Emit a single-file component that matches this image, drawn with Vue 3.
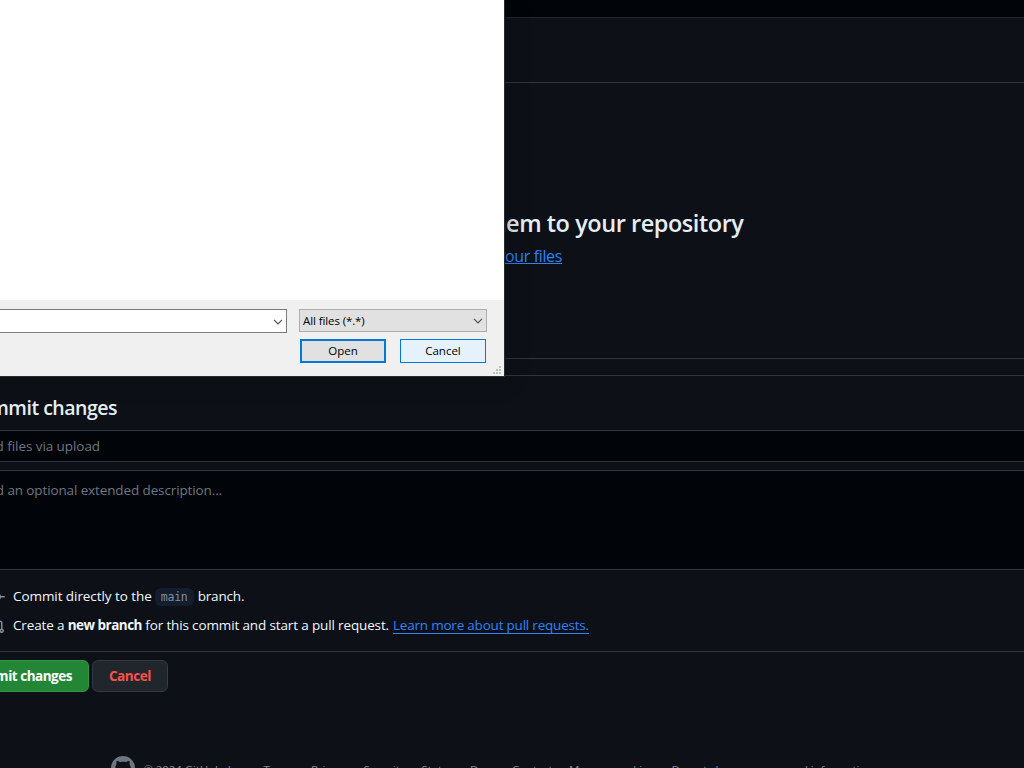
<script setup>
const footerLinks = [
  { label: 'Terms', left: 263.5 },
  { label: 'Privacy', left: 311 },
  { label: 'Security', left: 363.5 },
  { label: 'Status', left: 421.5 },
  { label: 'Docs', left: 470 },
  { label: 'Contact', left: 512 },
  { label: 'Manage cookies', left: 569 },
  { label: 'Do not share my personal information', left: 671.5 },
]
const slots = footerLinks.map((l, i) => ({
  label: l.label,
  width: i + 1 < footerLinks.length ? footerLinks[i + 1].left - l.left : 230,
}))
</script>

<template>
  <div class="page">
    <div class="topbar"></div>
    <div class="toolbar"></div>
    <section class="dropzone">
      <h2><span>Drag files here to add them to your repository</span></h2>
      <p>Or <a>choose your files</a></p>
    </section>

    <section class="commit">
      <h3><span>Commit changes</span></h3>
      <div class="field summary"><span>Add files via upload</span></div>
      <div class="field description"><span>Add an optional extended description...</span></div>
      <div class="choice first">
        <svg class="icon" width="16" height="16" viewBox="0 0 16 16"><path d="M11.93 8.5a4.002 4.002 0 0 1-7.86 0H.75a.75.75 0 0 1 0-1.5h3.32a4.002 4.002 0 0 1 7.86 0h3.32a.75.75 0 0 1 0 1.5Zm-1.43-.75a2.5 2.5 0 1 0-5 0 2.5 2.5 0 0 0 5 0Z" /></svg>
        <span class="direct">Commit directly to the</span><code>main</code><span class="branch">branch.</span>
      </div>
      <div class="choice">
        <svg class="icon" width="16" height="16" viewBox="0 0 16 16"><path d="M1.5 3.25a2.25 2.25 0 1 1 3 2.122v5.256a2.251 2.251 0 1 1-1.5 0V5.372A2.25 2.25 0 0 1 1.5 3.25Zm5.677-.177L9.573.677A.25.25 0 0 1 10 .854V2.5h1A2.5 2.5 0 0 1 13.5 5v5.628a2.251 2.251 0 1 1-1.5 0V5a1 1 0 0 0-1-1h-1v1.646a.25.25 0 0 1-.427.177L7.177 3.427a.25.25 0 0 1 0-.354ZM3.75 2.5a.75.75 0 1 0 0 1.5.75.75 0 0 0 0-1.5Zm0 9.5a.75.75 0 1 0 0 1.5.75.75 0 0 0 0-1.5Zm8.25.75a.75.75 0 1 0 1.5 0 .75.75 0 0 0-1.5 0Z" /></svg>
        <span class="create">Create a <b>new branch</b> for this commit and start a pull request.</span><a class="learn">Learn more about pull requests.</a>
      </div>
    </section>

    <div class="actions">
      <button class="submit">Commit changes</button>
      <button class="discard">Cancel</button>
    </div>

    <footer>
      <svg class="mark" width="24" height="24" viewBox="0 0 16 16"><path d="M8 0c4.42 0 8 3.58 8 8a8.013 8.013 0 0 1-5.45 7.59c-.4.08-.55-.17-.55-.38 0-.27.01-1.13.01-2.2 0-.75-.25-1.23-.54-1.48 1.78-.2 3.65-.88 3.65-3.95 0-.88-.31-1.59-.82-2.15.08-.2.36-1.02-.08-2.12 0 0-.67-.22-2.2.82-.64-.18-1.32-.27-2-.27-.68 0-1.36.09-2 .27-1.53-1.03-2.2-.82-2.2-.82-.44 1.1-.16 1.92-.08 2.12-.51.56-.82 1.28-.82 2.15 0 3.06 1.86 3.75 3.64 3.95-.23.2-.44.55-.51 1.07-.46.21-1.61.55-2.33-.66-.15-.24-.6-.83-1.23-.82-.67.01-.27.38.01.53.34.19.73.9.82 1.13.16.45.68 1.31 2.69.94 0 .67.01 1.3.01 1.49 0 .21-.15.45-.55.38A7.995 7.995 0 0 1 0 8c0-4.42 3.58-8 8-8Z" /></svg>
      <span class="legal">© 2024 GitHub, Inc.</span>
      <span v-for="s in slots" :key="s.label" :style="{ width: s.width + 'px' }">{{ s.label }}</span>
    </footer>

    <div class="dialog">
      <div class="list"></div>
      <div class="row">
        <div class="filename">
          <svg width="10" height="6" viewBox="0 0 10 6"><path d="M1 .8 5 4.8 9 .8" /></svg>
        </div>
        <div class="filter">
          <span>All files (*.*)</span>
          <svg width="10" height="6" viewBox="0 0 10 6"><path d="M1 .8 5 4.8 9 .8" /></svg>
        </div>
      </div>
      <div class="buttons">
        <button class="open">Open</button>
        <button class="cancel">Cancel</button>
      </div>
      <svg class="grip" width="8" height="8" viewBox="0 0 8 8"><path d="M6 0h2v2H6zM3 3h2v2H3zM6 3h2v2H6zM0 6h2v2H0zM3 6h2v2H3zM6 6h2v2H6z" /></svg>
    </div>
  </div>
</template>

<style>
html, body { margin: 0; background: #0d1117; }
</style>

<style scoped>
.page { position: relative; width: 1024px; height: 768px; overflow: hidden; background: #0d1117; color: #f0f6fc; font-family: "Open Sans", "Noto Sans", sans-serif; font-size: 13.5px; white-space: nowrap; }
.page * { box-sizing: border-box; }
.topbar { height: 18px; background: #010409; border-bottom: 1px solid #24292f; }
.toolbar { height: 65px; border-bottom: 1px solid #30363d; }
.dropzone { height: 276px; padding-top: 123px; border-bottom: 1px solid #30363d; }
h2, h3, p { margin: 0; }
h2 { width: 743.5px; height: 34px; display: flex; justify-content: flex-end; line-height: 34px; font-size: 23.5px; font-weight: 650; color: #e6edf3; letter-spacing: -.45px; }
p { width: 562px; margin-top: 4px; text-align: right; font-size: 16px; line-height: 24px; letter-spacing: -.35px; }
a { color: #2f81f7; text-decoration: underline; }
.commit { margin-top: 16px; height: 277px; border-top: 1px solid #30363d; border-bottom: 1px solid #30363d; }
h3 { width: 117px; height: 54px; display: flex; justify-content: flex-end; padding-top: 17px; line-height: 30px; font-size: 19.5px; font-weight: 650; color: #e6edf3; letter-spacing: -.5px; }
.field { background: #010409; border: solid #30363d; border-width: 1px 0; color: #6e7681; display: flex; }
.field span { display: flex; justify-content: flex-end; }
.summary { height: 32px; line-height: 30px; letter-spacing: -.07px; }
.summary span { width: 100px; }
.description { margin-top: 8px; height: 100px; padding-top: 9px; line-height: 20px; letter-spacing: -.12px; }
.description span { width: 222px; }
.choice { height: 20px; margin-top: 9px; margin-left: -11px; display: flex; align-items: center; line-height: 20px; color: #f0f6fc; }
.choice.first { margin-top: 17px; }
.icon { width: 16px; margin-right: 8px; fill: #848d97; flex: none; }
code { margin: 0 4px 0 3px; width: 39px; height: 18px; border-radius: 6px; background: #121d2f; color: #848d97; text-align: center; font: 11.5px/18px "DejaVu Sans Mono", monospace; letter-spacing: -.2px; }
.choice span { margin-bottom: 2px; }
.direct { letter-spacing: -.07px; }
.branch { letter-spacing: -.17px; }
.create { letter-spacing: -.14px; }
.create b { letter-spacing: -.53px; }
.learn { margin-left: 4px; margin-bottom: 1px; letter-spacing: -.21px; text-decoration: none; border-bottom: 1px solid #2f81f7; line-height: 16px; }
.actions { display: flex; gap: 3px; padding-top: 8px; height: 40px; margin-left: -40px; }
.actions button { height: 32px; border-radius: 6px; font: 700 13.5px/20px "Open Sans", sans-serif; padding: 0; white-space: nowrap; }
.submit { width: 129px; display: flex; justify-content: flex-end; align-items: center; padding-right: 16px !important; background: #238636; border: 1px solid #2f9a43; color: #fff; letter-spacing: -.48px; }
.discard { width: 76px; background: #21262d; border: 1px solid #363b42; color: #f85149; letter-spacing: -.42px; }
footer { display: flex; margin: 64px 0 0 111px; height: 24px; font-size: 11.5px; line-height: 28px; color: #848d97; letter-spacing: -.1px; }
footer span { flex: none; }
.mark { fill: #6e7681; margin-right: 8.5px; flex: none; }
.legal { width: 120px; }
.dialog { position: absolute; left: 0; top: 0; width: 505px; height: 377px; background: #f0f0f0; border: solid #2a2b2d; border-width: 0 1px 1px 0; color: #000; font-size: 11.5px; box-shadow: 3px 4px 18px rgba(11, 13, 12, .35); }
.list { height: 300px; background: #fff; }
.row { display: flex; padding-top: 9px; gap: 12px; align-items: flex-start; }
.filename, .filter { display: flex; align-items: center; justify-content: flex-end; }
.filename { width: 287px; height: 24px; background: #fff; border: 1px solid #7a7a7a; border-left: 0; padding: 1px 3px 0 0; }
.filter { width: 188px; height: 23px; background: #e1e1e1; border: 1px solid #adadad; padding: 0 3px; justify-content: space-between; letter-spacing: -.1px; }
.row svg { fill: none; stroke: #505050; stroke-width: 1.2; }
.buttons { display: flex; gap: 14px; padding: 6px 0 0 300px; }
.buttons button { width: 86px; height: 24px; padding: 0; font: 11.5px/18px "Open Sans", sans-serif; color: #000; background: #e1e1e1; border: 2px solid #0078d7; }
.buttons .cancel { background: #e5f1fb; border-width: 1px; }
.grip { position: absolute; right: 3px; bottom: 2px; fill: #bfbfbf; }
</style>
